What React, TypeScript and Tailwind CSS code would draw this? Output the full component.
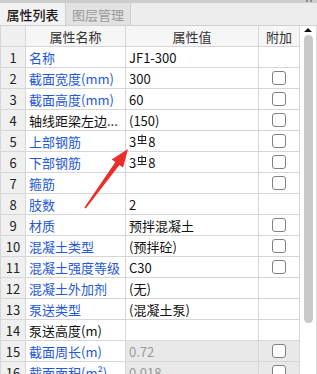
import React from "react";

type Row = { n: number; name: string; blue: boolean; value: React.ReactNode; cb: boolean; gray?: boolean };

const Rebar = () => (
  <svg width="10" height="10" viewBox="0 0 10 10" className="inline-block mx-[1px] -translate-y-[2px]" fill="none" stroke="#222" strokeWidth="1">
    <rect x="1.5" y="2.5" width="7" height="4" />
    <path d="M5 0.5V9.5M0.5 9.5H9.5" />
  </svg>
);

const bar = (
  <span className="flex items-center">
    3<Rebar />8
  </span>
);

const rows: Row[] = [
  { n: 1, name: "名称", blue: true, value: "JF1-300", cb: false },
  { n: 2, name: "截面宽度(mm)", blue: true, value: "300", cb: true },
  { n: 3, name: "截面高度(mm)", blue: true, value: "60", cb: true },
  { n: 4, name: "轴线距梁左边...", blue: false, value: "(150)", cb: true },
  { n: 5, name: "上部钢筋", blue: true, value: bar, cb: true },
  { n: 6, name: "下部钢筋", blue: true, value: bar, cb: true },
  { n: 7, name: "箍筋", blue: true, value: "", cb: true },
  { n: 8, name: "肢数", blue: true, value: "2", cb: false },
  { n: 9, name: "材质", blue: true, value: "预拌混凝土", cb: true },
  { n: 10, name: "混凝土类型", blue: true, value: "(预拌砼)", cb: true },
  { n: 11, name: "混凝土强度等级", blue: true, value: "C30", cb: true },
  { n: 12, name: "混凝土外加剂", blue: true, value: "(无)", cb: false },
  { n: 13, name: "泵送类型", blue: true, value: "(混凝土泵)", cb: false },
  { n: 14, name: "泵送高度(m)", blue: false, value: "", cb: false },
  { n: 15, name: "截面周长(m)", blue: true, value: "0.72", cb: true, gray: true },
  { n: 16, name: "截面面积(m²)", blue: true, value: "0.018", cb: true, gray: true },
];

const cell = "border-b border-r border-[#d6d6d6] flex items-center whitespace-nowrap overflow-hidden";

export default function App() {
  return (
    <div className="relative w-[317px] h-[374px] overflow-hidden bg-white text-[13px] leading-none font-['Noto_Sans_CJK_SC',sans-serif] text-[#111]">
      <div className="h-[3px] bg-[#cdcdcd] flex justify-end gap-[2px] pr-[5px]">
        <span className="w-[2px] h-[2px] bg-[#8c8c8c]" />
        <span className="w-[2px] h-[2px] bg-[#8c8c8c]" />
      </div>
      <div className="flex h-[23px] bg-[#ededed] border-b border-[#d0d0d0]">
        <div className="w-[66px] bg-[#f3f3f3] border-r border-[#d0d0d0] flex items-center justify-center text-[#1a1a1a] font-medium">属性列表</div>
        <div className="w-[65px] bg-[#e2e2e2] border-r border-[#d0d0d0] flex items-center justify-center text-[#9a9a9a]">图层管理</div>
      </div>
      <div className="flex">
        <div className="w-[300px] grid grid-cols-[26px_100px_133px_41px] auto-rows-[21px]">
          <div className={`${cell} bg-[#f0f0f0] border-l`} />
          <div className={`${cell} bg-[#f6f6f6] justify-center text-[#333]`}>属性名称</div>
          <div className={`${cell} bg-[#f6f6f6] justify-center text-[#333]`}>属性值</div>
          <div className={`${cell} bg-[#f6f6f6] justify-center text-[#333]`}>附加</div>
          {rows.map((r) => (
            <React.Fragment key={r.n}>
              <div className={`${cell} border-l bg-[#f0f0f0] justify-center text-[#222]`}>{r.n}</div>
              <div className={`${cell} pl-[3px] ${r.blue ? "text-[#2458d8]" : "text-[#111]"}`}>{r.name}</div>
              <div className={`${cell} pl-[3px] ${r.gray ? "bg-[#e9e9e9] text-[#9a9a9a]" : "text-[#111]"}`}>{r.value}</div>
              <div className={`${cell} justify-center ${r.gray ? "bg-[#e9e9e9]" : ""}`}>
                {r.cb && <span className="w-[14px] h-[14px] rounded-[3px] border border-[#808080] bg-white" />}
              </div>
            </React.Fragment>
          ))}
        </div>
        <div className="w-[17px] h-[348px] bg-white border-r border-[#dcdcdc] flex flex-col items-center">
          <svg width="8" height="4" viewBox="0 0 8 4" className="mt-[2px]">
            <path d="M0 4L4 0L8 4Z" fill="#111" />
          </svg>
          <div className="mt-[3px] w-[9px] h-[288px] rounded-full bg-[#c9c9c9]" />
        </div>
      </div>
      <svg className="absolute left-0 top-0 pointer-events-none" width="317" height="374" viewBox="0 0 317 374">
        <polygon
          points="84.4,207.5 115.4,162 111.7,159.4 128,149 123.1,167.6 119.4,165 85.8,208.6"
          fill="#ee2b2b"
        />
      </svg>
    </div>
  );
}
